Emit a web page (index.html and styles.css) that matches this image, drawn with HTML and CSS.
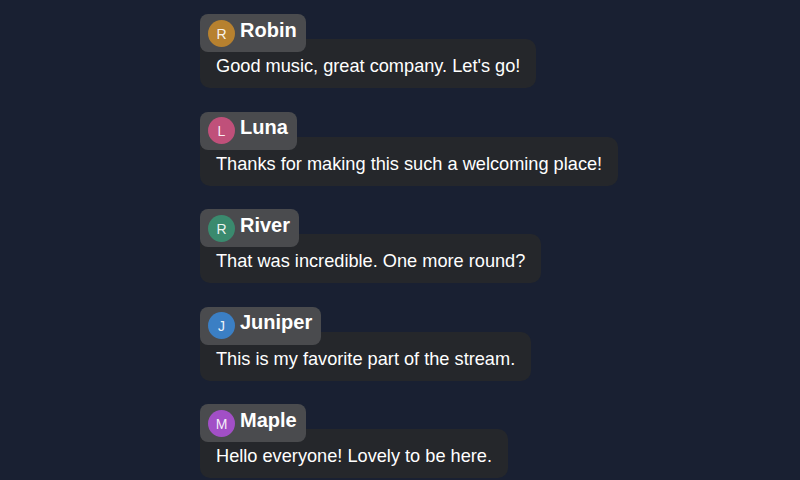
FILE: index.html
```html
<!DOCTYPE html>
<html>
<head>
<meta charset="utf-8">
<link rel="stylesheet" href="styles.css">
</head>
<body>
<div class="chat">
  <div class="msg">
    <div class="name-pill"><span class="avatar av-robin">R</span><span class="name">Robin</span></div>
    <div class="bubble">Good music, great company. Let's go!</div>
  </div>
  <div class="msg">
    <div class="name-pill"><span class="avatar av-luna">L</span><span class="name">Luna</span></div>
    <div class="bubble">Thanks for making this such a welcoming place!</div>
  </div>
  <div class="msg">
    <div class="name-pill"><span class="avatar av-river">R</span><span class="name">River</span></div>
    <div class="bubble">That was incredible. One more round?</div>
  </div>
  <div class="msg">
    <div class="name-pill"><span class="avatar av-juniper">J</span><span class="name">Juniper</span></div>
    <div class="bubble">This is my favorite part of the stream.</div>
  </div>
  <div class="msg">
    <div class="name-pill"><span class="avatar av-maple">M</span><span class="name">Maple</span></div>
    <div class="bubble">Hello everyone! Lovely to be here.</div>
  </div>
</div>
</body>
</html>
```
FILE: styles.css
```css
html, body {
  margin: 0;
  padding: 0;
  background: #192032;
  height: 100%;
  overflow: hidden;
}
.chat {
  display: flex;
  flex-direction: column;
  align-items: flex-start;
  gap: 23.5px;
  padding: 14px 0 0 200px;
  font-family: "Liberation Sans", Arial, sans-serif;
  color: #f2f2f2;
}
.msg {
  display: flex;
  flex-direction: column;
  align-items: flex-start;
}
.name-pill {
  position: relative;
  z-index: 1;
  display: flex;
  align-items: center;
  gap: 5px;
  height: 38px;
  box-sizing: border-box;
  padding: 0 9px 0 8px;
  margin-bottom: -13px;
  background: #4a4b4e;
  border-radius: 8px;
}
.avatar {
  width: 27px;
  height: 27px;
  border-radius: 50%;
  display: flex;
  align-items: center;
  justify-content: center;
  font-size: 14px;
  color: rgba(255,255,255,0.92);
  padding-top: 1px;
  box-sizing: border-box;
}
.av-robin { background: #b7812f; }
.av-luna { background: #c0507a; }
.av-river { background: #3a8a6e; }
.av-juniper { background: #3b7fc4; }
.av-maple { background: #a24fc6; }
.name {
  font-size: 20px;
  font-weight: bold;
  color: #ffffff;
  line-height: 24px;
  margin-top: -7px;
}
.bubble {
  background: #25272b;
  border-radius: 10px;
  padding: 17px 16px 11px 16px;
  font-size: 18.2px;
  line-height: 21px;
  color: #ffffff;
}
```
